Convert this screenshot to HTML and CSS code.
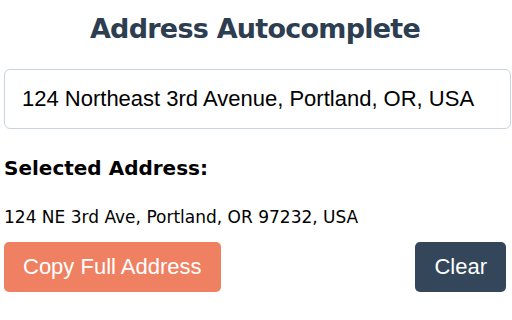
FILE: index.html
```html
<!DOCTYPE html>
<html>
<head>
<meta charset="utf-8">
<link rel="stylesheet" href="styles.css">
</head>
<body>
<div class="app">
  <h1 class="title">Address Autocomplete</h1>
  <input class="search" type="text" value="124 Northeast 3rd Avenue, Portland, OR, USA">
  <h2 class="label">Selected Address:</h2>
  <p class="result">124 NE 3rd Ave, Portland, OR 97232, USA</p>
  <div class="actions">
    <button class="btn btn-copy">Copy Full Address</button>
    <button class="btn btn-clear">Clear</button>
  </div>
</div>
</body>
</html>
```
FILE: styles.css
```css
html, body {
  margin: 0;
  padding: 0;
  background: #ffffff;
}
.app {
  width: 502px;
  padding: 0 6px 0 4px;
  font-family: "DejaVu Sans", Verdana, sans-serif;
}
.title {
  margin: 0;
  padding-top: 13px;
  height: 56px;
  box-sizing: border-box;
  text-align: center;
  font-size: 27px;
  font-weight: bold;
  letter-spacing: -0.75px;
  color: #2c3e50;
  line-height: 32px;
}
.search {
  display: block;
  box-sizing: border-box;
  width: 507px;
  height: 60px;
  margin: 13px 0 0 0;
  padding: 0 17px;
  border: 1px solid #cbd3df;
  border-radius: 6px;
  font-family: "Liberation Sans", Arial, sans-serif;
  font-size: 22px;
  color: #000;
  background: #fff;
  outline: none;
}
.label {
  margin: 27px 0 0 0;
  font-size: 20px;
  font-weight: bold;
  color: #000;
  line-height: 24px;
}
.result {
  margin: 27px 0 0 0;
  font-size: 17px;
  line-height: 20px;
  color: #000;
}
.actions {
  display: flex;
  justify-content: space-between;
  margin-top: 15px;
}
.btn {
  height: 50px;
  border: none;
  border-radius: 5px;
  font-family: "Liberation Sans", Arial, sans-serif;
  font-size: 22px;
  color: #fff;
  padding: 0 19px;
}
.btn-copy {
  background: #ef8162;
}
.btn-clear {
  background: #34465a;
}
```
